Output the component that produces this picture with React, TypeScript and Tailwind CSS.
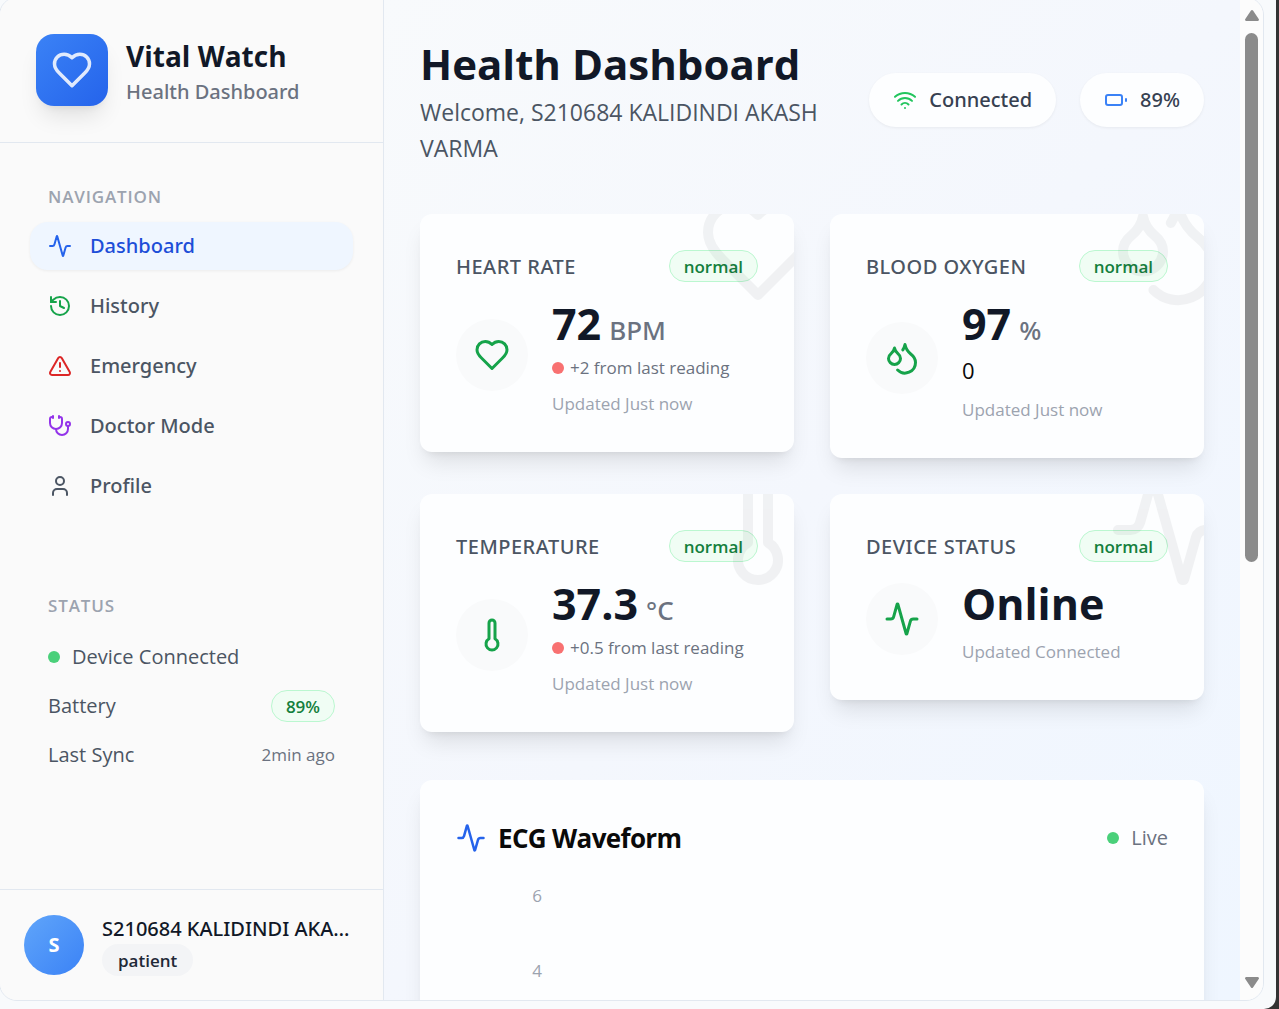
import type { ReactNode } from "react";
import {
  Activity,
  Droplets,
  History,
  Stethoscope,
  Thermometer,
  TriangleAlert,
  User,
  Wifi,
} from "lucide-react";

type IconProps = { className?: string };
type IconType = (props: IconProps) => ReactNode;

function Heart({ className }: IconProps) {
  return (
    <svg
      viewBox="0 0 24 24"
      fill="none"
      stroke="currentColor"
      strokeWidth="2"
      strokeLinecap="round"
      strokeLinejoin="round"
      className={className}
      aria-hidden="true"
    >
      <path d="M19 14c1.49-1.46 3-3.21 3-5.5A5.5 5.5 0 0 0 16.5 3c-1.76 0-3 .5-4.5 2-1.5-1.5-2.74-2-4.5-2A5.5 5.5 0 0 0 2 8.5c0 2.3 1.5 4.05 3 5.5l7 7Z" />
    </svg>
  );
}

function Battery({ className }: IconProps) {
  return (
    <svg
      viewBox="0 0 24 24"
      fill="none"
      stroke="currentColor"
      strokeWidth="2"
      strokeLinecap="round"
      strokeLinejoin="round"
      className={className}
      aria-hidden="true"
    >
      <rect width="16" height="10" x="2" y="7" rx="2" ry="2" />
      <line x1="22" x2="22" y1="11" y2="13" />
    </svg>
  );
}

const navItems: { label: string; icon: IconType; color: string; active?: boolean }[] = [
  { label: "Dashboard", icon: Activity as IconType, color: "text-[#2563eb]", active: true },
  { label: "History", icon: History as IconType, color: "text-[#16a34a]" },
  { label: "Emergency", icon: TriangleAlert as IconType, color: "text-[#dc2626]" },
  { label: "Doctor Mode", icon: Stethoscope as IconType, color: "text-[#9333ea]" },
  { label: "Profile", icon: User as IconType, color: "text-[#4b5563]" },
];

function Badge({ children }: { children: ReactNode }) {
  return (
    <span className="flex h-8 items-center rounded-full border border-[#bbf7d0] bg-[#f0fdf4] px-3.5 pt-px text-[17px] font-semibold text-[#15803d]">
      {children}
    </span>
  );
}

function Sidebar() {
  return (
    <aside className="flex w-96 shrink-0 flex-col border-r border-[#e2e8f0] bg-[#fafafa]">
      <div className="flex h-[145px] items-center gap-[18px] border-b border-[#e2e8f0] px-9">
        <div className="flex size-[72px] items-center justify-center rounded-[18px] bg-linear-to-br from-[#3b82f6] to-[#2563eb] shadow-[0_15px_22px_-5px_rgba(0,0,0,0.10),0_6px_9px_-6px_rgba(0,0,0,0.10)]">
          <Heart className="size-[42px] text-white/85" />
        </div>
        <div className="pt-2">
          <p className="text-[28px] leading-9 font-bold text-[#111827]">Vital Watch</p>
          <p className="font-['Noto_Sans',sans-serif] text-[20px] leading-9 font-medium text-[#6b7280]">
            Health Dashboard
          </p>
        </div>
      </div>

      <nav aria-label="Main" className="px-[30px] pt-9">
        <h2 className="px-[18px] text-[17px] leading-9 font-semibold tracking-wider text-[#9ca3af]">NAVIGATION</h2>
        <ul className="mt-[7px] flex flex-col gap-3">
          {navItems.map(({ label, icon: Icon, color, active }) => (
            <li key={label}>
              <a
                href="#"
                aria-current={active ? "page" : undefined}
                className={
                  active
                    ? "flex h-12 items-center gap-[18px] rounded-[18px] bg-[#eff6ff] px-[18px] font-['Noto_Sans',sans-serif] text-[20px] font-medium text-[#1d4ed8] shadow-[0_1px_3px_rgba(0,0,0,0.06)]"
                    : "flex h-12 items-center gap-[18px] rounded-[18px] px-[18px] font-['Noto_Sans',sans-serif] text-[20px] font-medium text-[#4b5563]"
                }
              >
                <span className={color}>
                  <Icon className="size-6" />
                </span>
                {label}
              </a>
            </li>
          ))}
        </ul>
      </nav>

      <section className="px-12 pt-[78px] text-[20px] text-[#4b5563]">
        <h2 className="text-[17px] leading-9 font-semibold tracking-wider text-[#9ca3af]">STATUS</h2>
        <div className="mt-4 flex h-[34px] items-center gap-3">
          <span className="size-3 rounded-full bg-[#4ad07a]" />
          Device Connected
        </div>
        <div className="mt-[15px] flex h-[34px] items-center justify-between">
          Battery
          <Badge>89%</Badge>
        </div>
        <div className="mt-[15px] flex h-[34px] items-center justify-between">
          Last Sync
          <span className="text-[17px] text-[#6b7280]">2min ago</span>
        </div>
      </section>

      <div className="mt-auto flex h-[111px] items-center gap-[18px] border-t border-[#e2e8f0] px-6">
        <div className="flex size-[60px] shrink-0 items-center justify-center rounded-full bg-linear-to-br from-[#60a5fa] to-[#3b82f6] text-[20px] font-bold text-white">
          S
        </div>
        <div className="min-w-0">
          <p className="truncate font-['Noto_Sans',sans-serif] text-[20px] leading-[30px] font-medium text-[#111827]">
            S210684 KALIDINDI AKA…
          </p>
          <span className="flex h-8 w-fit items-center rounded-full bg-[#f3f4f6] px-4 pt-px text-[17px] font-semibold text-[#1f2937]">
            patient
          </span>
        </div>
      </div>
    </aside>
  );
}

type Metric = {
  title: string;
  icon: IconType;
  value: string;
  unit?: string;
  change?: string;
  zero?: boolean;
  updated: string;
};

const metrics: Metric[] = [
  { title: "HEART RATE", icon: Heart, value: "72", unit: "BPM", change: "+2 from last reading", updated: "Updated Just now" },
  { title: "BLOOD OXYGEN", icon: Droplets as IconType, value: "97", unit: "%", zero: true, updated: "Updated Just now" },
  { title: "TEMPERATURE", icon: Thermometer as IconType, value: "37.3", unit: "°C", change: "+0.5 from last reading", updated: "Updated Just now" },
  { title: "DEVICE STATUS", icon: Activity as IconType, value: "Online", updated: "Updated Connected" },
];

function MetricCard({ title, icon: Icon, value, unit, change, zero, updated }: Metric) {
  return (
    <article className="relative overflow-hidden rounded-xl bg-[#fdfeff] p-9 shadow-[0_15px_22px_-5px_rgba(0,0,0,0.10),0_6px_9px_-6px_rgba(0,0,0,0.10)]">
      <div className="flex h-8 items-center justify-between">
        <h2 className="pt-0.5 font-['Noto_Sans',sans-serif] text-[20px] font-medium tracking-wide text-[#4b5563]">
          {title}
        </h2>
        <Badge>normal</Badge>
      </div>
      <div className="mt-3 flex items-center gap-6">
        <div className="flex size-[72px] shrink-0 items-center justify-center rounded-full bg-[#f9fafb] text-[#16a34a]">
          <Icon className="size-9" />
        </div>
        <div className="whitespace-nowrap">
          <p className="flex items-baseline gap-2 text-[43px] leading-[60px] font-bold text-[#111827]">
            {value}
            {unit && (
              <span className="font-['Noto_Sans',sans-serif] text-[26px] leading-9 font-medium text-[#6b7280]">
                {unit}
              </span>
            )}
          </p>
          {change && (
            <p className="flex h-8 items-center gap-1.5 pb-1 text-[17px] text-[#6b7280]">
              <span className="size-3 rounded-full bg-[#f87171]" />
              {change}
            </p>
          )}
          {zero && <p className="pb-1.5 text-[22px] leading-8 text-[#0a0a0a]">0</p>}
          <p className="mt-1.5 text-[17px] leading-6 text-[#9ca3af]">{updated}</p>
        </div>
      </div>
      <div className="pointer-events-none absolute -top-6 -right-6 text-[#111827] opacity-5">
        <Icon className="size-[120px]" />
      </div>
    </article>
  );
}

function Pill({ icon, children }: { icon: ReactNode; children: ReactNode }) {
  return (
    <div className="flex h-[54px] items-center gap-3 rounded-full bg-[#fdfeff] px-6 font-['Noto_Sans',sans-serif] text-[20px] font-medium text-[#374151] shadow-[0_1px_3px_rgba(0,0,0,0.06)]">
      {icon}
      {children}
    </div>
  );
}

function Scrollbar() {
  return (
    <div aria-hidden="true" className="flex w-[23px] shrink-0 flex-col items-center bg-[#fcfcfc] pt-3 pb-3 text-[#8b8b8b]">
      <svg viewBox="0 0 14 11" className="h-[11px] w-[14px] shrink-0" fill="currentColor">
        <path d="M6 .6a1.3 1.3 0 0 1 2 0l5.7 8.3a1.3 1.3 0 0 1-1 2.1H1.3a1.3 1.3 0 0 1-1-2.1z" />
      </svg>
      <div className="mt-3 h-[529px] w-[13px] rounded-full bg-[#8b8b8b]" />
      <svg viewBox="0 0 14 11" className="mt-auto h-[11px] w-[14px] shrink-0" fill="currentColor">
        <path d="M6 10.4a1.3 1.3 0 0 0 2 0l5.7-8.3a1.3 1.3 0 0 0-1-2.1H1.3a1.3 1.3 0 0 0-1 2.1z" />
      </svg>
    </div>
  );
}

export default function App() {
  return (
    <div className="h-screen overflow-hidden bg-[#333333] pr-[3px] font-['Open_Sans','Noto_Sans',sans-serif]">
      <div className="flex h-full overflow-hidden rounded-br-xl bg-[#f8fafc] pr-3 pb-2">
        <div className="-mt-[3px] -ml-px flex min-w-0 flex-1 overflow-hidden rounded-[18px] border border-[#e2e8f0]">
          <Sidebar />
          <main className="min-w-0 flex-1 overflow-hidden bg-linear-to-br from-[#f8fafc] via-[#f4f7fd] to-[#eff6ff] px-9 pt-9">
            <header className="flex items-center justify-between gap-6">
              <div className="min-w-0">
                <h1 className="text-[42px] leading-[60px] font-bold text-[#111827]">Health Dashboard</h1>
                <p className="text-[23px] leading-9 text-[#4b5563]">Welcome, S210684 KALIDINDI AKASH VARMA</p>
              </div>
              <div className="flex shrink-0 gap-6">
                <Pill icon={<Wifi className="size-6 text-[#22c55e]" />}>Connected</Pill>
                <Pill icon={<Battery className="size-6 text-[#3b82f6]" />}>89%</Pill>
              </div>
            </header>

            <section aria-label="Vitals" className="mt-12 grid grid-cols-2 items-start gap-9">
              {metrics.map((m) => (
                <MetricCard key={m.title} {...m} />
              ))}
            </section>

            <section className="mt-12 rounded-xl bg-[#fdfeff] p-9 shadow-[0_15px_22px_-5px_rgba(0,0,0,0.10),0_6px_9px_-6px_rgba(0,0,0,0.10)]">
              <div className="flex h-[42px] items-center justify-between pt-0.5">
                <h2 className="flex items-center gap-3 text-[26px] font-bold tracking-tight text-[#0a0a0a]">
                  <Activity className="size-[30px] text-[#2563eb]" />
                  ECG Waveform
                </h2>
                <p className="flex items-center gap-3 text-[20px] text-[#6b7280]">
                  <span className="size-3 rounded-full bg-[#4ad07a]" />
                  Live
                </p>
              </div>
              <div className="mt-[26px] flex w-[86px] flex-col gap-[51px] pb-60 text-right text-[17px] leading-6 text-[#9ca3af]">
                <span>6</span>
                <span>4</span>
              </div>
            </section>
          </main>
          <Scrollbar />
        </div>
      </div>
    </div>
  );
}
